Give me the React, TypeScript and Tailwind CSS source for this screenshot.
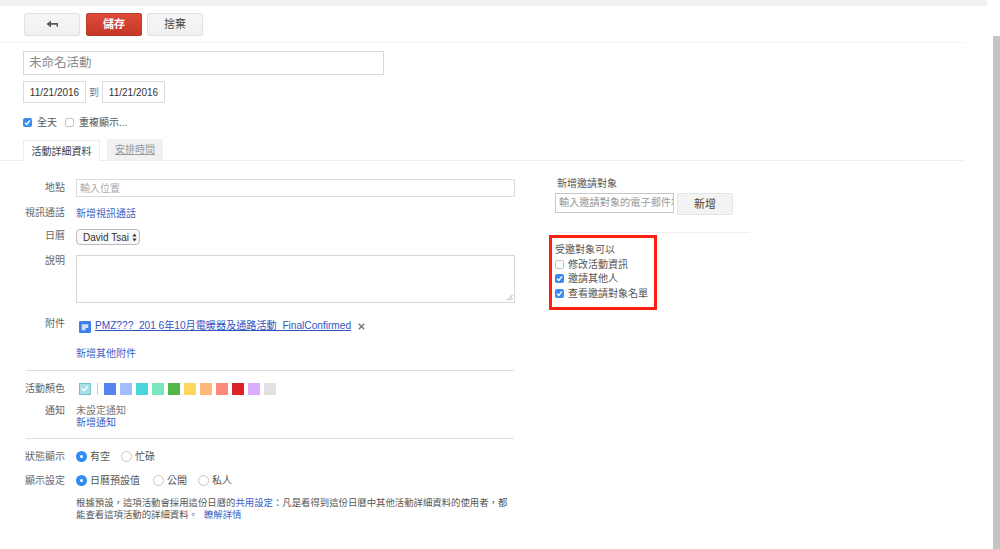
import type { ReactNode } from 'react';

const FONT = "font-['Liberation_Sans','Noto_Sans_CJK_TC',sans-serif]";

const COLORS = ['#5484ed', '#a4bdfc', '#46d6db', '#7ae7bf', '#51b749', '#fbd75b', '#ffb878', '#ff887c', '#dc2127', '#dbadff', '#e1e1e1'];

function Check({ on }: { on?: boolean }) {
  if (!on) return <span className="h-[9px] w-[9px] shrink-0 rounded-[2px] border border-[#c4c4c4] bg-white" />;
  return (
    <span className="flex h-[9px] w-[9px] shrink-0 items-center justify-center rounded-[2px] bg-[#3b8cf0]">
      <svg width="7" height="7" viewBox="0 0 8 8" fill="none" stroke="#fff" strokeWidth="1.6">
        <path d="M1.2 4.2 3.2 6.2 6.8 1.6" />
      </svg>
    </span>
  );
}

function RadioItem({ label, on, className }: { label: string; on?: boolean; className?: string }) {
  return (
    <div className={`flex items-center ${className ?? ''}`}>
      {on ? (
        <span className="flex h-[11px] w-[11px] shrink-0 items-center justify-center rounded-full bg-[#2f8cf2]">
          <span className="h-[3px] w-[3px] rounded-full bg-white" />
        </span>
      ) : (
        <span className="h-[11px] w-[11px] shrink-0 rounded-full border border-[#c8c8c8] bg-white" />
      )}
      <span className="ml-[3px] text-[#555]">{label}</span>
    </div>
  );
}

function Row({ label, h, className, children }: { label: string; h: string; className?: string; children: ReactNode }) {
  return (
    <div className={`flex ${h} ${className ?? ''}`}>
      <div className="w-[65px] shrink-0 text-right leading-[14px] text-[#666]">{label}</div>
      <div className="ml-[11px] min-w-0 flex-1">{children}</div>
    </div>
  );
}

export default function App() {
  return (
    <div className={`relative h-[549px] w-[1000px] overflow-hidden bg-white text-[10px] text-[#444] ${FONT}`}>
      <div className="h-[6px] w-[987px] bg-[#f1f1f1]" />

      {/* toolbar */}
      <div className="flex h-[37px] w-[964px] gap-[5px] border-b border-[#f3f3f3] pl-[24px] pt-[7px]">
        <button className="flex h-[23px] w-[56px] items-center justify-center rounded-[2px] border border-[#e0e0e0] bg-gradient-to-b from-[#f6f6f6] to-[#f0f0f0]">
          <svg width="13" height="9" viewBox="0 0 13 9" fill="#555">
            <path d="M0.5 4 5 0.5V3H12V6.8H10.6V4.8H5V7.5Z" />
          </svg>
        </button>
        <button className="ml-[1px] h-[23px] w-[56px] rounded-[2px] border border-[#b83a2b] bg-gradient-to-b from-[#dd4b39] to-[#c53727] text-[11px] font-bold text-white">
          儲存
        </button>
        <button className="h-[23px] w-[56px] rounded-[2px] border border-[#e0e0e0] bg-gradient-to-b from-[#f6f6f6] to-[#f0f0f0] text-[11px] text-[#444]">
          捨棄
        </button>
      </div>

      {/* title and dates */}
      <div className="pl-[23px] pt-[8px]">
        <div className="flex h-[24px] w-[361px] items-center border border-[#d9d9d9] px-[5px] text-[12.5px] text-[#8a8a8a]">未命名活動</div>
        <div className="mt-[6px] flex h-[22px] items-center">
          <div className="flex h-full w-[63px] items-center justify-center border border-[#dcdcdc] text-[#333]">11/21/2016</div>
          <span className="w-[16px] text-center text-[#777]">到</span>
          <div className="flex h-full w-[63px] items-center justify-center border border-[#dcdcdc] text-[#333]">11/21/2016</div>
        </div>
        <div className="mt-[12px] flex h-[15px] items-center">
          <Check on />
          <span className="ml-[5px] text-[#555]">全天</span>
          <span className="ml-[8px] flex items-center">
            <Check />
            <span className="ml-[5px] text-[#555]">重複顯示...</span>
          </span>
        </div>
      </div>

      {/* tabs */}
      <div className="mt-[9px] flex h-[22px] w-[964px] items-end border-b border-[#efefef] pl-[23px]">
        <div className="relative top-px flex h-[21px] w-[77px] items-center justify-center border-x border-t border-[#ececec] bg-white text-[#444]">活動詳細資料</div>
        <div className="ml-[7px] flex h-[21px] w-[56px] items-center justify-center bg-[#f1f1f1] text-[#999] underline">安排時間</div>
      </div>

      <div className="flex">
        {/* form */}
        <div className="w-[515px] shrink-0 pt-[17px]">
          <Row label="地點" h="h-[26px]" className="items-start pt-[3px]">
            <div className="-mt-[2px] flex h-[18px] w-[439px] items-center border border-[#dcdcdc] px-[3px] text-[#aaa]">輸入位置</div>
          </Row>
          <Row label="視訊通話" h="h-[24px]" className="pt-[2px]">
            <span className="leading-[14px] text-[#3b5fc4]">新增視訊通話</span>
          </Row>
          <Row label="日曆" h="h-[26px]" className="items-start pt-[1px]">
            <div className="flex h-[16px] w-[64px] items-center justify-between rounded-[4px] border border-[#bbb] bg-[#f8f8f8] pl-[6px] pr-[2px] text-[#333]">
              David Tsai
              <svg width="5" height="9" viewBox="0 0 5 9" fill="#333">
                <path d="M2.5 0.5 4.6 3.6H0.4ZM2.5 8.5 0.4 5.4H4.6Z" />
              </svg>
            </div>
          </Row>
          <Row label="說明" h="h-[62px]">
            <div className="relative mt-px h-[48px] w-[439px] border border-[#d6d6d6]">
              <svg className="absolute bottom-px right-px" width="7" height="7" viewBox="0 0 7 7" stroke="#888" strokeWidth="0.8">
                <path d="M1 6.5 6.5 1M4 6.5 6.5 4" />
              </svg>
            </div>
          </Row>
          <Row label="附件" h="h-[30px]" className="pt-px">
            <div className="flex items-center pl-[3px] pt-[1px]">
              <svg width="12" height="12" viewBox="0 0 11 11" className="mt-[2px]">
                <rect width="11" height="11" rx="1" fill="#3f7fe8" />
                <path d="M2.5 3H8.5V6.5H6V8.5H2.5Z" fill="#cfe0fb" />
              </svg>
              <span className="ml-[4px] text-[10.15px] text-[#2f55c0] underline">PMZ???_201 6年10月電暖器及通路活動_FinalConfirmed</span>
              <svg width="7" height="7" viewBox="0 0 7 7" stroke="#777" strokeWidth="1.5" className="ml-[7px] mt-[2px]">
                <path d="M0.8 0.8 6.2 6.2M6.2 0.8 0.8 6.2" />
              </svg>
            </div>
          </Row>
          <Row label="" h="h-[16px]">
            <span className="leading-[14px] text-[#3b5fc4]">新增其他附件</span>
          </Row>
          <div className="ml-[26px] mt-[8px] h-px w-[488px] bg-[#dddddd]" />

          <div className="mt-[9px] flex h-[17px] items-center">
            <div className="w-[65px] text-right text-[#666]">活動顏色</div>
            <div className="ml-[14px] flex h-[12px] w-[12px] items-center justify-center border border-[#6fc5c9] bg-[#a9e0e3]">
              <svg width="8" height="7" viewBox="0 0 9 8" fill="none" stroke="#fff" strokeWidth="1.6">
                <path d="M1 4 3.4 6.4 8 1" />
              </svg>
            </div>
            <div className="ml-[6px] h-[12px] w-px bg-[#ccc]" />
            <div className="ml-[6px] flex gap-[4px]">
              {COLORS.map((c) => (
                <div key={c} className="h-[12px] w-[12px]" style={{ background: c }} />
              ))}
            </div>
          </div>
          <div className="mt-[8px] flex h-[33px]">
            <div className="w-[65px] text-right leading-[12px] text-[#666]">通知</div>
            <div className="ml-[11px] leading-[12px]">
              <div className="text-[#777]">未設定通知</div>
              <div className="text-[#3b5fc4]">新增通知</div>
            </div>
          </div>
          <div className="ml-[26px] h-px w-[488px] bg-[#dddddd]" />

          <div className="mt-[10px] flex h-[14px] items-center">
            <div className="w-[65px] text-right text-[#666]">狀態顯示</div>
            <div className="ml-[11px] flex items-center">
              <RadioItem label="有空" on />
              <RadioItem label="忙碌" className="ml-[11px]" />
            </div>
          </div>
          <div className="mt-[10px] flex h-[14px] items-center">
            <div className="w-[65px] text-right text-[#666]">顯示設定</div>
            <div className="ml-[11px] flex items-center">
              <RadioItem label="日曆預設值" on />
              <RadioItem label="公開" className="ml-[13px]" />
              <RadioItem label="私人" className="ml-[11px]" />
            </div>
          </div>
          <p className="ml-[76px] mt-[10px] w-[436px] text-[9.4px] leading-[12px] text-[#555]">
            根據預設，這項活動會採用這份日曆的<span className="text-[#3b5fc4]">共用設定</span>：凡是看得到這份日曆中其他活動詳細資料的使用者，都能查看這項活動的詳細資料。
            <span className="ml-[6px] text-[#3b5fc4]">瞭解詳情</span>
          </p>
        </div>

        {/* guests */}
        <div className="ml-[40px] w-[195px] pt-[16px]">
          <div className="pl-[2px] leading-[14px] text-[#555]">新增邀請對象</div>
          <div className="mt-[2px] flex items-start">
            <div className="flex h-[20px] w-[119px] items-center overflow-hidden whitespace-nowrap border border-[#c8c8c8] px-[3px] text-[10.2px] text-[#999]">輸入邀請對象的電子郵件地址</div>
            <button className="ml-[3px] h-[22px] w-[56px] rounded-[2px] border border-[#e4e4e4] bg-[#f3f3f3] text-[11px] text-[#444]">新增</button>
          </div>
          <div className="mt-[17px] h-px w-full bg-[#f0f0f0]" />
          <div className="mt-[10px] leading-[14px] text-[#555]">受邀對象可以</div>
          <div className="flex h-[14px] items-center"><Check /><span className="ml-[4px] text-[#555]">修改活動資訊</span></div>
          <div className="flex h-[15px] items-center"><Check on /><span className="ml-[4px] text-[#555]">邀請其他人</span></div>
          <div className="flex h-[14px] items-center"><Check on /><span className="ml-[4px] text-[#555]">查看邀請對象名單</span></div>
        </div>
      </div>

      {/* red highlight drawn over the guest options */}
      <div className="absolute left-[549px] top-[235px] h-[75px] w-[108px] border-[3px] border-[#fb1f10]" />
      {/* scrollbar */}
      <div className="absolute bottom-0 right-0 top-[36px] w-[7px] bg-[#c4c4c4]" />
    </div>
  );
}
